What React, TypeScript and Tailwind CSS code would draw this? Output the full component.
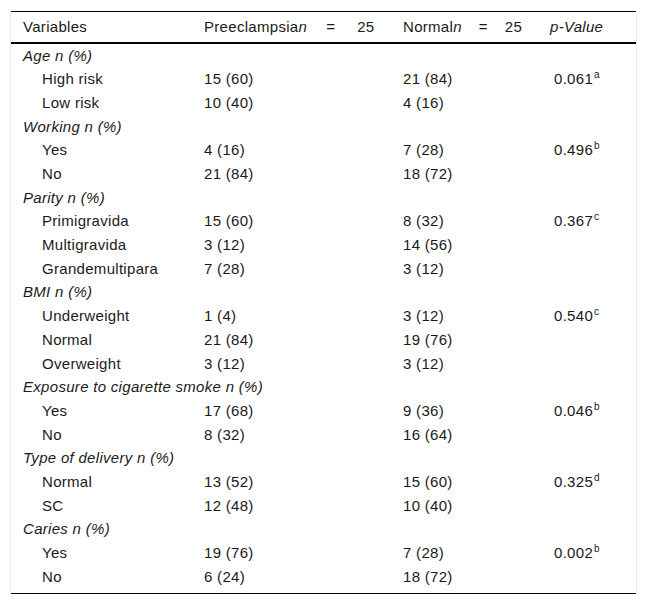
import React from 'react';

type Row = { label: string; pre: string; normal: string; p?: string; sup?: string };
type Group = { title: string; rows: Row[] };

const groups: Group[] = [
  {
    title: 'Age n (%)',
    rows: [
      { label: 'High risk', pre: '15 (60)', normal: '21 (84)', p: '0.061', sup: 'a' },
      { label: 'Low risk', pre: '10 (40)', normal: '4 (16)' },
    ],
  },
  {
    title: 'Working n (%)',
    rows: [
      { label: 'Yes', pre: '4 (16)', normal: '7 (28)', p: '0.496', sup: 'b' },
      { label: 'No', pre: '21 (84)', normal: '18 (72)' },
    ],
  },
  {
    title: 'Parity n (%)',
    rows: [
      { label: 'Primigravida', pre: '15 (60)', normal: '8 (32)', p: '0.367', sup: 'c' },
      { label: 'Multigravida', pre: '3 (12)', normal: '14 (56)' },
      { label: 'Grandemultipara', pre: '7 (28)', normal: '3 (12)' },
    ],
  },
  {
    title: 'BMI n (%)',
    rows: [
      { label: 'Underweight', pre: '1 (4)', normal: '3 (12)', p: '0.540', sup: 'c' },
      { label: 'Normal', pre: '21 (84)', normal: '19 (76)' },
      { label: 'Overweight', pre: '3 (12)', normal: '3 (12)' },
    ],
  },
  {
    title: 'Exposure to cigarette smoke n (%)',
    rows: [
      { label: 'Yes', pre: '17 (68)', normal: '9 (36)', p: '0.046', sup: 'b' },
      { label: 'No', pre: '8 (32)', normal: '16 (64)' },
    ],
  },
  {
    title: 'Type of delivery n (%)',
    rows: [
      { label: 'Normal', pre: '13 (52)', normal: '15 (60)', p: '0.325', sup: 'd' },
      { label: 'SC', pre: '12 (48)', normal: '10 (40)' },
    ],
  },
  {
    title: 'Caries n (%)',
    rows: [
      { label: 'Yes', pre: '19 (76)', normal: '7 (28)', p: '0.002', sup: 'b' },
      { label: 'No', pre: '6 (24)', normal: '18 (72)' },
    ],
  },
];

const cols = 'grid grid-cols-[181px_199px_149px_1fr]';

export default function App() {
  return (
    <div className="min-h-[603px] bg-white pt-[11px] pl-[10px] pr-[9px] font-['Liberation_Sans',Arial,sans-serif] text-[15px] tracking-[0.3px] text-[#1a1a1a]">
      <div className="border-x border-[#ececec]">
        <div className="border-t border-black">
          {/* header */}
          <div className={`${cols} h-[32px] items-center border-b-2 border-black`}>
            <div className="pl-3">Variables</div>
            <div className="pl-3 flex items-center">
              <span>Preeclampsia</span>
              <i>n</i>
              <span className="ml-[19px]">=</span>
              <span className="ml-[22px]">25</span>
            </div>
            <div className="pl-3 flex items-center">
              <span>Normal</span>
              <i>n</i>
              <span className="ml-[17px]">=</span>
              <span className="ml-[17px]">25</span>
            </div>
            <div className="pl-[10px] italic">p-Value</div>
          </div>

          <div className="pb-[4px] border-b border-black">
            {groups.map((g) => (
              <div key={g.title}>
                <div className="h-[23.7px] flex items-center pl-3 italic">{g.title}</div>
                {g.rows.map((r, i) => (
                  <div key={i} className={`${cols} h-[23.7px] items-center`}>
                    <div className="pl-[31px]">{r.label}</div>
                    <div className="pl-3">{r.pre}</div>
                    <div className="pl-3">{r.normal}</div>
                    <div className="pl-[14px]">
                      {r.p}
                      {r.sup && <sup className="text-[10px] top-[-0.6em] ml-[1px]">{r.sup}</sup>}
                    </div>
                  </div>
                ))}
              </div>
            ))}
          </div>
        </div>
      </div>
    </div>
  );
}
